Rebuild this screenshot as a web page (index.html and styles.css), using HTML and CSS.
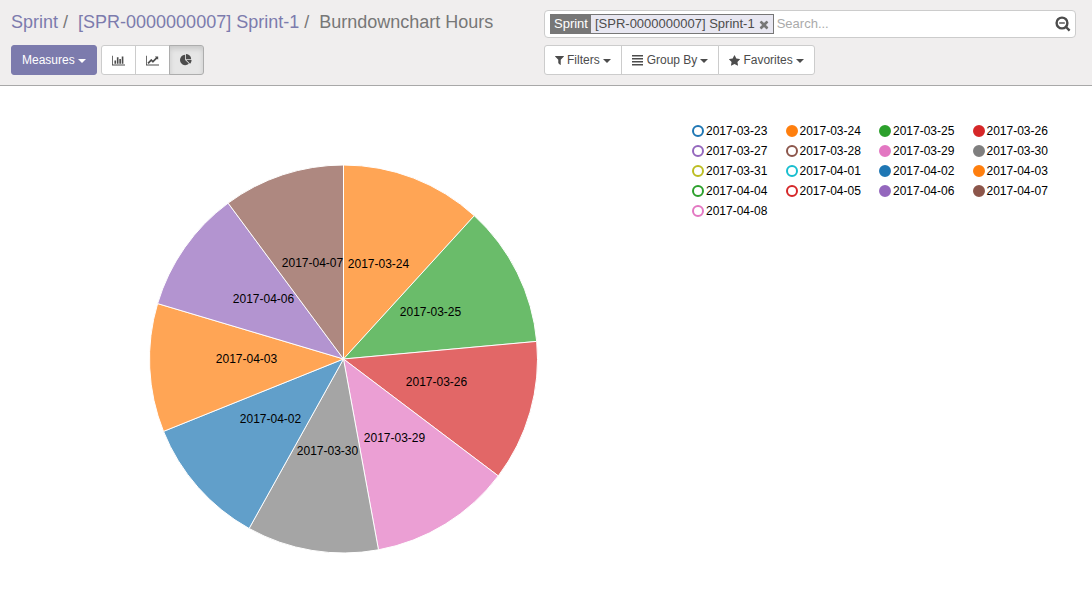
FILE: index.html
```html
<!DOCTYPE html>
<html lang="en">
<head>
<meta charset="utf-8">
<title>Burndownchart Hours</title>
<link rel="stylesheet" href="styles.css">
</head>
<body>
<header class="control-panel">
  <nav aria-label="Breadcrumb">
    <ol class="breadcrumb">
      <li><a href="#">Sprint</a></li>
      <li><a href="#">[SPR-0000000007] Sprint-1</a></li>
      <li aria-current="page">Burndownchart Hours</li>
    </ol>
  </nav>
  <div class="search">
    <div class="facet">
      <span class="facet-label">Sprint</span>
      <span class="facet-value">[SPR-0000000007] Sprint-1</span>
      <button class="facet-remove" type="button" aria-label="Remove filter"><svg class="icon-remove" viewBox="0 0 1408 1792"><path transform="translate(-192)" d="M1490 1322q0 40-28 68l-136 136q-28 28-68 28t-68-28l-294-294-294 294q-28 28-68 28t-68-28l-136-136q-28-28-28-68t28-68l294-294-294-294q-28-28-28-68t28-68l136-136q28-28 68-28t68 28l294 294 294-294q28-28 68-28t68 28l136 136q28 28 28 68t-28 68l-294 294 294 294q28 28 28 68z"/></svg></button>
    </div>
    <input class="search-input" type="text" placeholder="Search..." aria-label="Search">
    <button class="search-toggle" type="button" aria-label="Advanced search"><svg class="icon-search" viewBox="0 0 16 16"><circle cx="7" cy="7" r="5.4"/><path d="M11 11l3.6 3.6"/><path class="minus" d="M4.2 7h5.6"/></svg></button>
  </div>
  <div class="toolbar">
    <button class="btn btn-primary" type="button">Measures <span class="caret"></span></button>
    <div class="btn-group">
      <button class="btn btn-icon" type="button" aria-label="Bar chart"><svg class="icon-wide" viewBox="0 0 2048 1792"><path d="M640 896v512h-256v-512h256zm384-512v1024h-256v-1024h256zm1024 1152v128h-2048v-1536h128v1408h1920zm-640-896v768h-256v-768h256zm384-384v1152h-256v-1152h256z"/></svg></button>
      <button class="btn btn-icon" type="button" aria-label="Line chart"><svg class="icon-wide" viewBox="0 0 2048 1792"><path d="M2048 1536v128h-2048v-1536h128v1408h1920zm-128-1248v435q0 21-19.5 29.5t-35.5-7.5l-121-121-633 633q-10 10-23 10t-23-10l-233-233-416 416-192-192 585-585q10-10 23-10t23 10l233 233 464-464-121-121q-16-16-7.500-35.500t29.500-19.500h435q14 0 23 9t9 23z"/></svg></button>
      <button class="btn btn-icon active" type="button" aria-label="Pie chart" aria-pressed="true"><svg class="icon" viewBox="0 0 1792 1792"><path d="M768 890l546 546q-106 108-247.500 168t-298.500 60q-209 0-385.500-103t-279.500-279.500-103-385.500 103-385.500 279.500-279.500 385.500-103v762zm187 6h773q0 157-60 298.500t-168 247.500zm709-128h-768v-768q209 0 385.500 103t279.500 279.500 103 385.500z"/></svg></button>
    </div>
  </div>
  <div class="toolbar">
    <div class="btn-group">
      <button class="btn" type="button"><svg class="icon-filter" viewBox="0 0 1408 1792"><path transform="translate(-192)" d="M1595 295q17 41-14 70l-493 493v742q0 42-39 59-13 5-25 5-27 0-45-19l-256-256q-19-19-19-45v-486l-493-493q-31-29-14-70 17-39 59-39h1280q42 0 59 39z"/></svg> Filters <span class="caret"></span></button>
      <button class="btn" type="button"><svg class="icon" viewBox="0 0 12 12"><path d="M0 1h11v1.500H0zM0 4h11v1.500H0zM0 7h11v1.500H0zM0 10h11v1.500H0z"/></svg> Group By <span class="caret"></span></button>
      <button class="btn" type="button"><svg class="icon-star" viewBox="64 0 1664 1664"><path d="M1728 647q0 22-26 48l-363 354 86 500q1 7 1 20 0 21-10.500 35.500t-30.500 14.500q-19 0-40-12l-449-236-449 236q-22 12-40 12-21 0-31.500-14.500t-10.500-35.500q0-6 2-20l86-500-364-354q-25-27-25-48 0-37 56-46l502-73 225-455q19-41 49-41t49 41l225 455 502 73q56 9 56 46z"/></svg> Favorites <span class="caret"></span></button>
    </div>
  </div>
</header>
<main class="graph">
  <div class="pie-area">
    <svg class="pie" viewBox="-194.5 -195 389 390" role="img" aria-label="Hours by date">
      <g class="slices">
        <path class="orange" d="M0 0L0-194A194 194 0 0 1 130.800-143.300Z"/>
        <path class="green" d="M0 0L130.800-143.300A194 194 0 0 1 193.200-17.600Z"/>
        <path class="red" d="M0 0L193.200-17.600A194 194 0 0 1 154.800 116.900Z"/>
        <path class="pink" d="M0 0L154.800 116.900A194 194 0 0 1 35 190.800Z"/>
        <path class="gray" d="M0 0L35 190.800A194 194 0 0 1-94.400 169.500Z"/>
        <path class="blue" d="M0 0L-94.400 169.500A194 194 0 0 1-180 72.400Z"/>
        <path class="orange" d="M0 0L-180 72.400A194 194 0 0 1-185.900-55.400Z"/>
        <path class="purple" d="M0 0L-185.900-55.400A194 194 0 0 1-115.400-155.900Z"/>
        <path class="brown" d="M0 0L-115.400-155.900A194 194 0 0 1 0-194Z"/>
      </g>
      <g class="slice-labels">
        <text x="35" y="-91">2017-03-24</text>
        <text x="87" y="-43">2017-03-25</text>
        <text x="93" y="27">2017-03-26</text>
        <text x="51" y="83">2017-03-29</text>
        <text x="-16" y="96">2017-03-30</text>
        <text x="-73" y="64">2017-04-02</text>
        <text x="-97" y="4">2017-04-03</text>
        <text x="-80" y="-56">2017-04-06</text>
        <text x="-31" y="-92">2017-04-07</text>
      </g>
    </svg>
  </div>
  <div class="legend">
    <button class="key blue" type="button" aria-pressed="false">2017-03-23</button>
    <button class="key orange" type="button" aria-pressed="true">2017-03-24</button>
    <button class="key green" type="button" aria-pressed="true">2017-03-25</button>
    <button class="key red" type="button" aria-pressed="true">2017-03-26</button>
    <button class="key purple" type="button" aria-pressed="false">2017-03-27</button>
    <button class="key brown" type="button" aria-pressed="false">2017-03-28</button>
    <button class="key pink" type="button" aria-pressed="true">2017-03-29</button>
    <button class="key gray" type="button" aria-pressed="true">2017-03-30</button>
    <button class="key olive" type="button" aria-pressed="false">2017-03-31</button>
    <button class="key cyan" type="button" aria-pressed="false">2017-04-01</button>
    <button class="key blue" type="button" aria-pressed="true">2017-04-02</button>
    <button class="key orange" type="button" aria-pressed="true">2017-04-03</button>
    <button class="key green" type="button" aria-pressed="false">2017-04-04</button>
    <button class="key red" type="button" aria-pressed="false">2017-04-05</button>
    <button class="key purple" type="button" aria-pressed="true">2017-04-06</button>
    <button class="key brown" type="button" aria-pressed="true">2017-04-07</button>
    <button class="key pink" type="button" aria-pressed="false">2017-04-08</button>
  </div>
</main>
</body>
</html>
```
FILE: styles.css
```css
*, *::before { box-sizing: border-box; }

body {
  margin: 0;
  background: #fff;
  color: #4c4c4c;
  font: 13px/18px "Liberation Sans", Arial, sans-serif;
}

button, input { font: inherit; color: inherit; }
button { cursor: pointer; }
svg { fill: currentColor; }

/* Control panel */
.control-panel {
  display: grid;
  grid-template-columns: 1fr 1fr;
  gap: 7px 1px;
  padding: 10px 16px 10px 11px;
  background: #f0eeee;
  border-bottom: 1px solid #a8a8a8;
}

.breadcrumb {
  display: flex;
  margin: 0;
  padding: 0;
  list-style: none;
  font-size: 18px;
  line-height: 24px;
  color: #777;
  white-space: nowrap;
}
.breadcrumb li + li::before { content: "/\a0"; padding: 0 5px; }
.breadcrumb a { color: #7c7bad; text-decoration: none; }

.search {
  display: flex;
  align-items: center;
  height: 28px;
  padding: 0 4px 0 5px;
  background: #fff;
  border: 1px solid #ccc;
  border-radius: 4px;
}
.facet {
  display: flex;
  align-items: center;
  flex: none;
  height: 20px;
  background: #e8e7f1;
  border: 1px solid #777;
}
.facet-label { padding: 0 3px; background: #777; color: #fff; }
.facet-value { padding-left: 4px; }
.facet-remove {
  display: flex;
  padding: 0 4px;
  border: 0;
  background: none;
  color: #777;
}
.icon-remove { width: 10px; height: 13px; }
.search-input {
  flex: 1;
  min-width: 0;
  padding: 0 3px;
  border: 0;
  outline: 0;
  background: none;
}
.search-input::placeholder { color: #aaa; opacity: 1; }
.search-toggle { display: flex; padding: 0; border: 0; background: none; }
.icon-search { width: 16px; height: 16px; fill: none; stroke: currentColor; stroke-width: 2.4; }
.icon-search .minus { stroke-width: 1.4; }

.toolbar { display: flex; gap: 4px; }
.btn-group { display: flex; }
.btn {
  display: flex;
  align-items: center;
  gap: 3px;
  height: 30px;
  padding: 0 10px;
  border: 1px solid #ccc;
  background: #fff;
  font-size: 12px;
  white-space: nowrap;
}
.btn-group .btn + .btn { margin-left: -1px; }
.btn-group .btn:first-child { border-radius: 3px 0 0 3px; }
.btn-group .btn:last-child { border-radius: 0 3px 3px 0; }
.btn-primary {
  border-color: #7c7bad;
  border-radius: 3px;
  background: #7c7bad;
  color: #fff;
}
.btn-icon { justify-content: center; width: 35px; }
.btn.active {
  border-color: #adadad;
  background: #e6e6e6;
  box-shadow: inset 0 3px 5px rgba(0, 0, 0, .125);
}
.caret {
  margin-top: 2px;
  border-top: 4px solid;
  border-left: 4px solid transparent;
  border-right: 4px solid transparent;
}
.icon-wide { width: 15px; height: 13px; }
.icon { width: 12px; height: 12px; }
.icon-filter { width: 9px; height: 12px; }
.icon-star { width: 11px; height: 11px; }

/* Graph */
.graph {
  display: flex;
  align-items: flex-start;
  gap: 5px;
  padding: 35px 26px 35px 0;
  font-size: 12px;
  color: #000;
}
.blue { --series: #1f77b4; }
.orange { --series: #ff7f0e; }
.green { --series: #2ca02c; }
.red { --series: #d62728; }
.purple { --series: #9467bd; }
.brown { --series: #8c564b; }
.pink { --series: #e377c2; }
.gray { --series: #7f7f7f; }
.olive { --series: #bcbd22; }
.cyan { --series: #17becf; }

.pie-area { flex: 1; padding-top: 43px; }
.pie { display: block; width: 389px; max-width: 100%; margin: 0 auto; }
.slices path { fill: var(--series); stroke: #fff; opacity: .7; }
.slice-labels { fill: #000; text-anchor: middle; }

.legend {
  display: grid;
  grid-template-columns: repeat(4, 1fr);
  width: 374px;
}
.key {
  display: flex;
  align-items: center;
  gap: 2px;
  height: 20px;
  padding: 0;
  border: 0;
  background: none;
}
.key::before {
  content: "";
  width: 12px;
  height: 12px;
  border: 2px solid var(--series);
  border-radius: 50%;
}
.key[aria-pressed="true"]::before { background: var(--series); }
```
